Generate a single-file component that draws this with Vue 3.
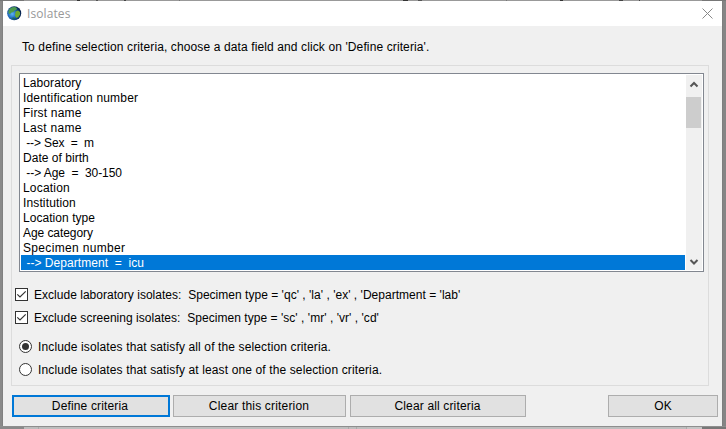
<script setup>
import { ref } from 'vue'

const fields = [
  { text: 'Laboratory', width: 58.3 },
  { text: 'Identification number', width: 115 },
  { text: 'First name', width: 58.5 },
  { text: 'Last name', width: 58.5 },
  { text: ' --> Sex  =  m', width: 71 },
  { text: 'Date of birth', width: 65.7 },
  { text: ' --> Age  =  30-150', width: 99 },
  { text: 'Location', width: 46.7 },
  { text: 'Institution', width: 52.7 },
  { text: 'Location type', width: 72 },
  { text: 'Age category', width: 70 },
  { text: 'Specimen number', width: 102 },
  { text: ' --> Department  =  icu', width: 121 },
]
const selected = ref(12)
const mode = ref('all')
const excludes = [
  { id: 'lab', text: "Exclude laboratory isolates:  Specimen type = 'qc' , 'la' , 'ex' , 'Department = 'lab'" },
  { id: 'screen', text: "Exclude screening isolates:  Specimen type = 'sc' , 'mr' , 'vr' , 'cd'" },
]
const modes = [
  { id: 'all', text: 'Include isolates that satisfy all of the selection criteria.' },
  { id: 'any', text: 'Include isolates that satisfy at least one of the selection criteria.' },
]
</script>

<template>
  <div class="desktop">
    <div class="backdrop top"></div>
    <div class="middle">
      <section class="window">
        <header class="titlebar">
          <svg class="globe" width="15" height="15" viewBox="0 0 15 15">
            <defs>
              <radialGradient id="sea" cx=".36" cy=".55" r=".62">
                <stop offset="0" stop-color="#5fb4f2" />
                <stop offset=".45" stop-color="#226fc4" />
                <stop offset="1" stop-color="#04204a" />
              </radialGradient>
            </defs>
            <circle cx="7.2" cy="7.3" r="7" fill="url(#sea)" />
            <path d="M2.500 3 5 1.200 8 1l2 1.200-.5 1.500L7.500 4.500 6.500 6 4.500 6.500 3 8 1.500 7.500 1.500 5Z" fill="#4c9a4e" />
            <path d="M8.500 5.500 11 4.500 13 6v2.500l-1.500 2.500-2 1-1.500-2Z" fill="#6fa92f" />
            <path d="M4 12 6.500 11.500 9 12.800l-2 .8Z" fill="#1c6a58" />
          </svg>
          <h1>Isolates</h1>
          <svg class="close" width="11" height="11" viewBox="0 0 11 11">
            <path d="M.5.5l10 10M10.500.5l-10 10" fill="none" stroke="#888" stroke-width="1" />
          </svg>
        </header>
        <p class="intro">To define selection criteria, choose a data field and click on 'Define criteria'.</p>
        <div class="group">
          <div class="listbox">
            <ul>
              <li v-for="(f, i) in fields" :key="i" :class="{ selected: i === selected }" @click="selected = i">
                <svg class="label" height="15" :width="f.width + 4"><text x="0" y="12" xml:space="preserve" :textLength="f.width" lengthAdjust="spacing">{{ f.text }}</text></svg>
              </li>
            </ul>
            <div class="scrollbar">
              <svg width="16" height="22" viewBox="0 0 16 22"><path d="M4.500 11.500 8 8l3.500 3.500" fill="none" stroke="#555" stroke-width="2" /></svg>
              <div class="thumb"></div>
              <svg class="down" width="16" height="16" viewBox="0 0 16 16"><path d="M4.500 6 8 9.500l3.500-3.500" fill="none" stroke="#555" stroke-width="2" /></svg>
            </div>
          </div>
          <label v-for="e in excludes" :key="e.id" class="check" :class="e.id">
            <svg width="13" height="13" viewBox="0 0 13 13">
              <rect x=".5" y=".5" width="12" height="12" fill="#fff" stroke="#333" />
              <path d="M2.300 6.300 5 9l5.700-5.700" fill="none" stroke="#333" stroke-width="1.200" />
            </svg>
            <span>{{ e.text }}</span>
          </label>
          <label v-for="m in modes" :key="m.id" class="radio" :class="m.id" @click="mode = m.id">
            <svg width="13" height="13" viewBox="0 0 13 13">
              <circle cx="6.500" cy="6.500" r="6" fill="#fff" stroke="#333" />
              <circle v-if="mode === m.id" cx="6.500" cy="6.500" r="3.500" fill="#333" />
            </svg>
            <span>{{ m.text }}</span>
          </label>
        </div>
        <footer>
          <button class="define"><span>Define criteria</span></button>
          <button class="clear-one"><span>Clear this criterion</span></button>
          <button class="clear-all"><span>Clear all criteria</span></button>
          <button class="ok"><span>OK</span></button>
        </footer>
      </section>
    </div>
    <div class="backdrop bottom"></div>
  </div>
</template>

<style>
body { margin: 0; overflow: hidden; }
</style>

<style scoped>
* { box-sizing: border-box; }
.desktop {
  width: 726px; height: 429px; display: flex; flex-direction: column; overflow: hidden;
  background: #858585; font: 12px/15px "Liberation Sans", Arial, sans-serif; color: #000;
}
.backdrop.top {
  height: 1px;
  background: linear-gradient(90deg, #777 0 24px, #999 24px 77px, #333 77px 80px, #999 80px 96px, #555 96px 98px, #999 98px 124px, #444 124px 126px, #999 126px 179px, #777 179px 180px, #999 180px 403px, #333 403px 408px, #999 408px 418px, #555 418px 422px, #999 422px 506px, #777 506px 507px, #999 507px 560px, #333 560px 563px, #999 563px 619px, #444 619px 623px, #999 623px 639px, #444 639px 640px, #999 640px 702px, #777 702px);
}
.middle { padding-left: 3px; padding-right: 4px; background: linear-gradient(90deg, #8a8a8a 2px, #777 3px, #777 722px, #858585 723px); }
.window { width: 719px; height: 425px; background: #f0f0f0; display: flex; flex-direction: column; }
.titlebar { height: 25px; background: #fff; display: flex; align-items: center; flex: none; }
.globe { margin: 0 0 1px 4px; }
h1 { margin: 0 0 0 5px; font: 12px/16px "Open Sans", "Noto Sans", sans-serif; color: #999; letter-spacing: .1px; }
.close { margin: 0 9px 0 auto; }
.intro { margin: 14px 0 0 19px; height: 15px; white-space: pre; letter-spacing: .115px; }
.group { margin: 10px 0 0 8px; width: 698px; height: 321px; border: 1px solid #dcdcdc; padding: 7px; display: flex; flex-direction: column; align-items: flex-start; }
.listbox { width: 685px; height: 199px; border: 1px solid #828790; background: #fff; display: flex; padding: 1px; flex: none; }
ul { list-style: none; margin: 0; padding: 0; width: 664px; }
li { height: 15px; padding-left: 2px; }
li svg { display: block; overflow: visible; }
li text { fill: #000; font-size: 12px; white-space: pre; }
.selected { background: #0078d7; }
.selected text { fill: #fff; }
.scrollbar { margin-left: 1px; width: 16px; height: 195px; background: #f0f0f0; display: flex; flex-direction: column; flex: none; }
.scrollbar svg { display: block; flex: none; }
.thumb { width: 15px; height: 31px; background: #cdcdcd; }
.scrollbar .down { margin-top: auto; }
.check, .radio { display: flex; align-items: center; height: 15px; white-space: pre; flex: none; }
.check span, .radio span { padding-top: 2px; }
.check { gap: 6px; margin-left: -4px; }
.radio { gap: 6px; }
.check.lab { margin-top: 15px; letter-spacing: .025px; }
.check.screen { margin-top: 8px; letter-spacing: .04px; }
.radio.all { margin-top: 14px; letter-spacing: .125px; }
.radio.any { margin-top: 8px; letter-spacing: .125px; }
footer { margin: 9px 4px 0 9px; height: 22px; display: flex; }
button { height: 22px; padding: 0; border: 1px solid #adadad; background: #e1e1e1; font: inherit; color: #000; }
.define { width: 158px; border: 2px solid #0078d7; padding-right: 2px; letter-spacing: .15px; }
.clear-one { width: 173px; margin-left: 3px; padding-right: 1px; letter-spacing: .18px; }
.clear-all { width: 176px; margin-left: 4px; padding-right: 1px; letter-spacing: .15px; }
.ok { width: 110px; margin-left: auto; }
.backdrop.bottom { height: 3px; background: linear-gradient(90deg, #8a8a8a 0 24px, #bdbdbd 24px 38px, #aaa 38px 39px, #bebebe 39px 348px, #aaa 348px 349px, #bebebe 349px 356px, #aaa 356px 357px, #bebebe 357px 686px, #aaa 686px 687px, #c5c5c5 687px 702px, #777 702px); border-top: 1px solid #8e8e8e; }
</style>
